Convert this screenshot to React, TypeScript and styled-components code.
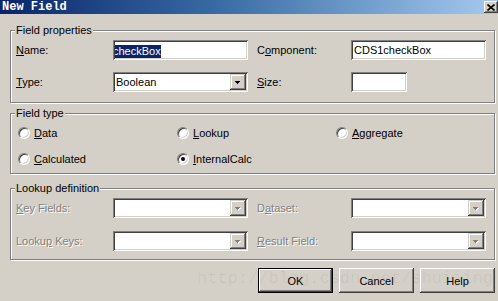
import React from "react";
import styled, { createGlobalStyle, css } from "styled-components";

const Global = createGlobalStyle`
  html, body { margin: 0; padding: 0; background: #d4d0c8; }
  body {
    width: 498px; height: 301px; overflow: hidden;
    font-family: "Liberation Sans", Arial, sans-serif; font-size: 11px; color: #000;
  }
  * { box-sizing: border-box; }
`;

const Window = styled.div`
  position: relative;
  width: 498px;
  height: 301px;
  background: #d4d0c8;
  overflow: hidden;
  display: flex;
  flex-direction: column;
`;

const TitleBar = styled.div`
  height: 14px;
  display: flex;
  align-items: center;
  justify-content: space-between;
  background: linear-gradient(to right, #0a246a 0%, #3a6ea5 45%, #a6caf0 100%);
  padding-left: 2px;
`;

const Title = styled.span`
  font-family: "Liberation Mono", monospace;
  font-weight: bold;
  font-size: 12px;
  line-height: 14px;
  color: #fff;
`;

const CloseBtn = styled.div`
  width: 14px;
  height: 12px;
  margin-right: 0;
  background: #d4d0c8;
  box-shadow: inset -1px -1px #404040, inset 1px 1px #fff, inset -2px -2px #808080;
  display: flex;
  align-items: center;
  justify-content: center;
`;

const Body = styled.div`
  padding: 16px 3px 0 10px;
  display: flex;
  flex-direction: column;
`;

const Group = styled.div<{ $mt?: number; $pt: number; $pb: number; $pl: number }>`
  position: relative;
  width: 485px;
  border: 1px solid #808080;
  box-shadow: 1px 1px 0 #fff, inset 1px 1px 0 #fff;
  margin-top: ${(p) => p.$mt ?? 0}px;
  padding: ${(p) => p.$pt}px 0 ${(p) => p.$pb}px ${(p) => p.$pl}px;
`;

const Legend = styled.span`
  position: absolute;
  top: -8px;
  left: 4px;
  padding: 0 1px;
  line-height: 14px;
  background: #d4d0c8;
`;

const FormGrid = styled.div<{ $gap: number }>`
  display: grid;
  grid-template-columns: 97px 144px 94px 135px;
  row-gap: ${(p) => p.$gap}px;
  align-items: center;
`;

const Label = styled.label<{ $disabled?: boolean }>`
  white-space: nowrap;
  line-height: 13px;
  ${(p) =>
    p.$disabled &&
    css`
      color: #808080;
      text-shadow: 1px 1px 0 #fff;
    `}
`;

const TextBox = styled.div<{ $w: number }>`
  width: ${(p) => p.$w}px;
  height: 20px;
  background: #fff;
  padding: 2px;
  display: flex;
  align-items: stretch;
  box-shadow: inset 1px 1px #808080, inset -1px -1px #fff, inset 2px 2px #404040,
    inset -2px -2px #d4d0c8;
`;

const FieldText = styled.div`
  flex: 1;
  overflow: hidden;
  white-space: nowrap;
  line-height: 16px;
  padding-left: 1px;
`;

const Selected = styled.span`
  display: inline-block;
  margin-left: -3px;
  background: #0a246a;
  color: #fff;
  line-height: 13px;
  vertical-align: middle;
`;

const DropButton = styled.div`
  width: 16px;
  height: 16px;
  background: #d4d0c8;
  display: flex;
  align-items: center;
  justify-content: center;
  box-shadow: inset -1px -1px #404040, inset 1px 1px #d4d0c8, inset -2px -2px #808080,
    inset 2px 2px #fff;
`;

const RadioGrid = styled.div`
  display: grid;
  grid-template-columns: 159px 159px auto;
  row-gap: 10px;
`;

const RadioItem = styled.label`
  display: flex;
  align-items: center;
  gap: 4px;
  height: 16px;
  white-space: nowrap;
`;

const RadioCircle = styled.span<{ $checked?: boolean }>`
  position: relative;
  width: 12px;
  height: 12px;
  border-radius: 50%;
  background: #fff;
  border: 1px solid;
  border-color: #808080 #fff #fff #808080;
  box-shadow: inset 1px 1px #404040, inset -1px -1px #d4d0c8;
  ${(p) =>
    p.$checked &&
    css`
      &::after {
        content: "";
        position: absolute;
        left: 3px;
        top: 3px;
        width: 4px;
        height: 4px;
        border-radius: 50%;
        background: #000;
      }
    `}
`;

const ButtonRow = styled.div`
  display: flex;
  justify-content: flex-end;
  gap: 6px;
  margin-top: 8px;
`;

const Button = styled.button<{ $default?: boolean }>`
  width: 75px;
  height: 25px;
  padding: 0;
  border: none;
  background: #d4d0c8;
  font-family: "Liberation Sans", Arial, sans-serif;
  font-size: 11px;
  color: #000;
  box-shadow: inset -1px -1px #404040, inset 1px 1px #fff, inset -2px -2px #808080,
    inset 2px 2px #d4d0c8;
  ${(p) =>
    p.$default &&
    css`
      box-shadow: inset 0 0 0 1px #000, inset -2px -2px #404040, inset 2px 2px #fff,
        inset -3px -3px #808080;
    `}
`;

const Watermark = styled.div`
  position: absolute;
  left: 197px;
  top: 268px;
  font-family: "Liberation Mono", monospace;
  font-size: 17px;
  line-height: 22px;
  color: rgba(0, 0, 0, 0.06);
  white-space: nowrap;
  pointer-events: none;
`;

const Arrow = ({ disabled }: { disabled?: boolean }) => (
  <svg width="8" height="5" viewBox="0 0 8 5">
    {disabled && <path d="M2 2h5v1h-1v1h-1v1h-1v-1h-1v-1h-1z" fill="#fff" />}
    <path d="M1 1h5v1h-1v1h-1v1h-1v-1h-1v-1h-1z" fill={disabled ? "#808080" : "#000"} />
  </svg>
);

const Combo = ({ w, value, disabled }: { w: number; value?: string; disabled?: boolean }) => (
  <TextBox $w={w}>
    <FieldText>{value}</FieldText>
    <DropButton>
      <Arrow disabled={disabled} />
    </DropButton>
  </TextBox>
);

const Radio = ({ checked, children }: { checked?: boolean; children: React.ReactNode }) => (
  <RadioItem>
    <RadioCircle $checked={checked} />
    <span>{children}</span>
  </RadioItem>
);

export default function App() {
  return (
    <Window>
      <Global />
      <TitleBar>
        <Title>New Field</Title>
        <CloseBtn>
          <svg width="8" height="7" viewBox="0 0 8 7">
            <path d="M0.5 0.5L7.5 6.5M7.5 0.5L0.5 6.5" stroke="#000" strokeWidth="1.6" />
          </svg>
        </CloseBtn>
      </TitleBar>
      <Body>
        <Group $pt={9} $pb={10} $pl={5}>
          <Legend>Field properties</Legend>
          <FormGrid $gap={12}>
            <Label>
              <u>N</u>ame:
            </Label>
            <TextBox $w={135}>
              <FieldText>
                <Selected>checkBox</Selected>
              </FieldText>
            </TextBox>
            <Label>
              C<u>o</u>mponent:
            </Label>
            <TextBox $w={135}>
              <FieldText>CDS1checkBox</FieldText>
            </TextBox>
            <Label>
              <u>T</u>ype:
            </Label>
            <Combo w={135} value="Boolean" />
            <Label>
              <u>S</u>ize:
            </Label>
            <TextBox $w={56}>
              <FieldText />
            </TextBox>
          </FormGrid>
        </Group>

        <Group $mt={10} $pt={11} $pb={6} $pl={7}>
          <Legend>Field type</Legend>
          <RadioGrid>
            <Radio>
              <u>D</u>ata
            </Radio>
            <Radio>
              <u>L</u>ookup
            </Radio>
            <Radio>
              <u>A</u>ggregate
            </Radio>
            <Radio>
              <u>C</u>alculated
            </Radio>
            <Radio checked>
              <u>I</u>nternalCalc
            </Radio>
          </RadioGrid>
        </Group>

        <Group $mt={14} $pt={9} $pb={8} $pl={5}>
          <Legend>Lookup definition</Legend>
          <FormGrid $gap={13}>
            <Label $disabled>
              <u>K</u>ey Fields:
            </Label>
            <Combo w={135} disabled />
            <Label $disabled>
              D<u>a</u>taset:
            </Label>
            <Combo w={135} disabled />
            <Label $disabled>
              Looku<u>p</u> Keys:
            </Label>
            <Combo w={135} disabled />
            <Label $disabled>
              <u>R</u>esult Field:
            </Label>
            <Combo w={135} disabled />
          </FormGrid>
        </Group>

        <ButtonRow>
          <Button $default>OK</Button>
          <Button>Cancel</Button>
          <Button>Help</Button>
        </ButtonRow>
      </Body>
      <Watermark>http://blog.csdn.net/shuijing</Watermark>
    </Window>
  );
}
